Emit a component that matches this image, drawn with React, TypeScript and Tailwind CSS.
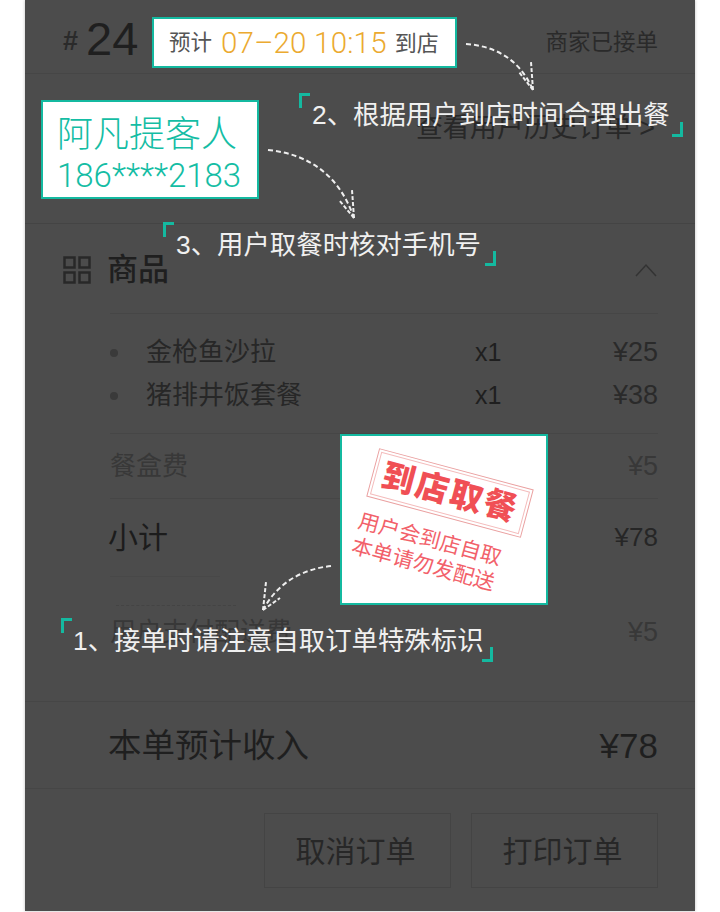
const cjk = "font-['Liberation_Sans','Noto_Sans_CJK_SC',sans-serif]";
const thin = "font-['Roboto','Noto_Sans_CJK_SC',sans-serif]";

const Corners = ({ className }: { className: string }) => (
  <div className={`absolute ${className}`}>
    <div className="absolute left-0 top-0 h-[15px] w-[11px] border-l-[3px] border-t-[3px] border-[#14b9a0]" />
    <div className="absolute bottom-0 right-0 h-[15px] w-[11px] border-b-[3px] border-r-[3px] border-[#14b9a0]" />
  </div>
);

const Arrow = ({ className, d, w, h, head }: { className: string; d: string; w: number; h: number; head: string }) => (
  <svg className={`absolute ${className}`} width={w} height={h} viewBox={`0 0 ${w} ${h}`} fill="none" stroke="#eeeeee" strokeWidth="2" strokeDasharray="5 3">
    <path d={d} />
    <path d={head} strokeDasharray="4 2" />
  </svg>
);

const Item = ({ name, qty, price }: { name: string; qty: string; price: string }) => (
  <div className="flex h-[43px] items-center pl-[85px] text-[26px] text-[#2a2a2a]">
    <div className="h-[8px] w-[8px] rounded-full bg-[#3a3a3a]" />
    <div className="ml-[28px] w-[329px] text-[#272727]">{name}</div>
    <div className="w-[60px] text-[25px] text-[#1f1f1f]">{qty}</div>
    <div className="ml-auto text-[27px] text-[#2a2a2a]">{price}</div>
  </div>
);

export default function App() {
  return (
    <div className={`relative h-[912px] w-[720px] overflow-hidden bg-white ${cjk}`}>
      <div className="ml-[25px] flex h-[911px] w-[670px] flex-col bg-[#4c4c4c] pr-[37px] text-[#262626] shadow-[0_0_3px_rgba(0,0,0,0.25)]">
        <header className="-mr-[37px] flex h-[74px] items-center border-b border-[#464646] pl-[38px] pr-[37px]">
          <span className="mt-[10px] text-[27px] font-bold text-[#2a2a2a]">#</span>
          <span className="ml-[8px] mt-[3px] text-[47px] leading-none text-[#1f1f1f]">24</span>
          <span className="ml-auto mt-[12px] text-[22.5px] text-[#2a2a2a]">商家已接单</span>
        </header>
        <section className="-mr-[37px] flex h-[150px] items-start justify-end border-b border-[#444444] pr-[40px] pt-[34px] text-[27px] text-[#282828]">
          <span>查看用户历史订单 &gt;</span>
        </section>
        <section className="-mr-[37px] flex h-[89px] items-center pl-[38px] pr-[37px] pt-[3px]">
          <svg width="28" height="28" viewBox="0 0 28 28" fill="none" stroke="#282828" strokeWidth="2.5">
            <rect x="1.5" y="1.5" width="10" height="10" />
            <rect x="16.5" y="1.5" width="10" height="10" />
            <rect x="1.5" y="16.5" width="10" height="10" />
            <rect x="16.5" y="16.5" width="10" height="10" />
          </svg>
          <span className="ml-[16px] text-[31px] font-medium text-[#1f1f1f]">商品</span>
          <svg className="ml-auto" width="24" height="14" viewBox="0 0 24 14" fill="none" stroke="#333333" strokeWidth="1.5">
            <path d="M2 13 12 2l10 11" />
          </svg>
        </section>
        <div className="ml-[85px] h-px bg-[#464646]" />
        <div className="pb-[16px] pt-[17px]">
          <Item name="金枪鱼沙拉" qty="x1" price="¥25" />
          <Item name="猪排井饭套餐" qty="x1" price="¥38" />
        </div>
        <div className="ml-[85px] h-px bg-[#464646]" />
        <div className="ml-[85px] flex h-[64px] items-center justify-between text-[26px] text-[#383838]">
          <span>餐盒费</span>
          <span className="text-[27px]">¥5</span>
        </div>
        <div className="ml-[85px] h-px bg-[#464646]" />
        <div className="ml-[83px] flex h-[77px] items-center justify-between text-[30px] text-[#1c1c1c]">
          <span>小计</span>
          <span className="text-[26px] text-[#262626]">¥78</span>
        </div>
        <div className="ml-[85px] h-px w-[110px] bg-[#484848]" />
        <div className="ml-[85px] h-[124px] pt-[28px] text-[#383838]">
          <div className="mx-[6px] h-px w-[120px] border-t border-dashed border-[#444444]" />
          <div className="flex h-[52px] items-center justify-between text-[26px]">
            <span>用户支付配送费</span>
            <span className="text-[27px]">¥5</span>
          </div>
        </div>
        <div className="-mr-[37px] h-px bg-[#464646]" />
        <div className="ml-[83px] flex h-[86px] items-center justify-between pt-[3px] text-[#1f1f1f]">
          <span className="text-[33.5px]">本单预计收入</span>
          <span className="text-[35px]">¥78</span>
        </div>
        <div className="-mr-[37px] h-px bg-[#464646]" />
        <footer className="flex justify-end gap-[20px] pt-[24px]">
          <div className="flex h-[75px] w-[187px] items-center justify-center border border-[#444444] pr-[4px] pt-[2px] text-[30px] text-[#272727]">取消订单</div>
          <div className="flex h-[75px] w-[187px] items-center justify-center border border-[#444444] pr-[4px] pt-[2px] text-[30px] text-[#272727]">打印订单</div>
        </footer>
      </div>

      <div className={`absolute left-[152px] top-[17px] flex h-[51px] w-[305px] items-center border-2 border-[#14b9a0] bg-white pl-[15px] pt-[2px] text-[#555555] ${thin}`}>
        <span className="text-[21.5px]">预计</span>
        <span className="ml-[9px] text-[29.5px] font-light tracking-[0.2px] text-[#ebaa30]">07–20 10:15</span>
        <span className="ml-[8px] text-[22px]">到店</span>
      </div>

      <div className={`absolute left-[41px] top-[100px] h-[99px] w-[218px] border-2 border-[#14b9a0] bg-white pl-[14px] pt-[9px] font-light text-[#14bda4] ${thin}`}>
        <div className="text-[36px] leading-[48px]">阿凡提客人</div>
        <div className="text-[33px] leading-[34px]">186****2183</div>
      </div>

      <div className="absolute left-[340px] top-[434px] h-[171px] w-[208px] overflow-hidden border-2 border-[#14b9a0] bg-white">
        <div className="absolute left-[28px] top-[32px] flex h-[50px] w-[160px] rotate-[15deg] items-center justify-center whitespace-nowrap border border-[#eaa0a0] text-[33px] font-black tracking-[2px] text-[#f04f55] outline outline-1 -outline-offset-4 outline-[#f4bcbc]">
          到店取餐
        </div>
        <div className="absolute left-[11px] top-[90px] w-[147px] rotate-[15deg] whitespace-nowrap text-center text-[21px] leading-[26px] text-[#f2616a]">
          <div>用户会到店自取</div>
          <div>本单请勿发配送</div>
        </div>
      </div>

      <Corners className="left-[299px] top-[93px] h-[44px] w-[384px]" />
      <Corners className="left-[163px] top-[222px] h-[44px] w-[333px]" />
      <Corners className="left-[61px] top-[618px] h-[44px] w-[432px]" />

      <div className="absolute left-[312px] top-[96px] whitespace-nowrap text-[26.4px] leading-[38px] text-[#f0f0f0]">2、根据用户到店时间合理出餐</div>
      <div className="absolute left-[176px] top-[226px] whitespace-nowrap text-[26.4px] leading-[38px] text-[#f0f0f0]">3、用户取餐时核对手机号</div>
      <div className="absolute left-[73px] top-[622px] whitespace-nowrap text-[26.4px] leading-[38px] text-[#f0f0f0]">1、接单时请注意自取订单特殊标识</div>

      <Arrow className="left-[464px] top-[40px]" w={74} h={54} d="M2 4C30 6 55 18 69 50" head="M69 50 55 32M69 50 67 22" />
      <Arrow className="left-[266px] top-[146px]" w={92} h={76} d="M2 4C40 8 72 26 88 72" head="M88 72 73 54M88 72 86 44" />
      <Arrow className="left-[258px] top-[562px]" w={76} h={52} d="M73 4C45 7 20 20 5 48" head="M5 48 8 20M5 48 22 36" />
    </div>
  );
}
